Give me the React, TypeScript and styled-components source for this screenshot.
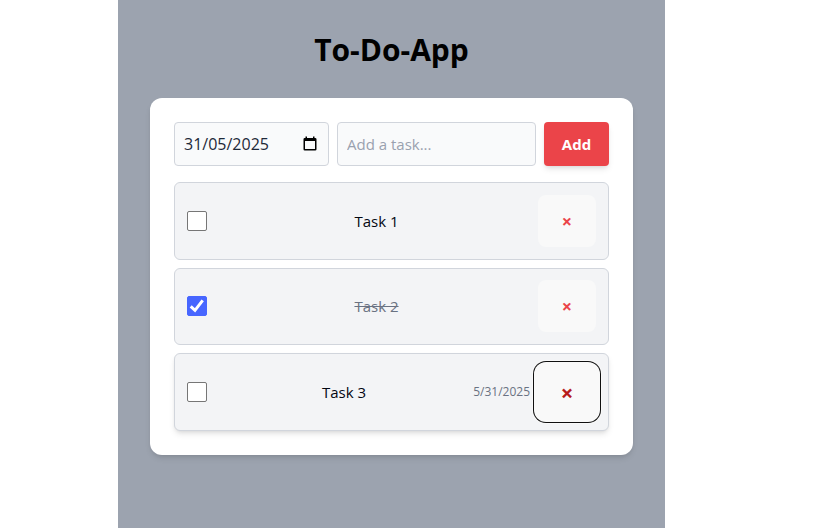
import React, { useState } from "react";
import styled, { createGlobalStyle, css } from "styled-components";

const GlobalStyle = createGlobalStyle`
  *, *::before, *::after { box-sizing: border-box; }
  body {
    margin: 0;
    background: #ffffff;
    color: #030712;
    font-family: "Segoe UI", "Open Sans", "Noto Sans", sans-serif;
    font-size: 15px;
    line-height: 24px;
  }
  button, input { font: inherit; }
`;

const Page = styled.div`
  display: grid;
  grid-template-columns: 118fr 547fr 174fr;
  min-height: 100vh;
`;

const Main = styled.main`
  grid-column: 2;
  min-width: 0;
  padding: 32px;
  background: #9ca3af;
`;

const Title = styled.h1`
  margin: 0 0 30px;
  text-align: center;
  font-size: 30px;
  line-height: 36px;
  font-weight: 700;
  color: #000000;
`;

const Card = styled.section`
  padding: 24px;
  border-radius: 12px;
  background: #ffffff;
  box-shadow: 0 4px 6px -1px rgba(0, 0, 0, 0.1), 0 2px 4px -2px rgba(0, 0, 0, 0.1);
`;

const Form = styled.form`
  display: flex;
  gap: 8px;
  height: 44px;
  margin-bottom: 16px;
`;

const fieldBox = css`
  border: 1px solid #d1d5dc;
  border-radius: 4px;
  background: #f9fafb;
`;

const DateField = styled.div`
  ${fieldBox}
  display: flex;
  align-items: center;
  flex: 0 0 155px;
  min-width: 0;
  padding: 0 11px 0 9px;
`;

const DateInput = styled.input`
  flex: 1;
  width: 0;
  min-width: 0;
  padding: 0;
  border: 0;
  outline: 0;
  background: transparent;
  color: #1e2939;
  font-size: 16px;
`;

const PickerButton = styled.button`
  display: flex;
  flex: none;
  padding: 0;
  border: 0;
  background: transparent;
  cursor: pointer;
`;

const TaskInput = styled.input`
  ${fieldBox}
  flex: 1;
  min-width: 0;
  padding: 0 9px;
  color: #1e2939;
  &::placeholder { color: #99a1af; opacity: 1; }
`;

const AddButton = styled.button`
  flex: 0 0 65px;
  padding: 0;
  border: 0;
  border-radius: 4px;
  background: #eb4449;
  color: #ffffff;
  font-weight: 700;
  cursor: pointer;
  box-shadow: 0 4px 6px -1px rgba(0, 0, 0, 0.1), 0 2px 4px -2px rgba(0, 0, 0, 0.1);
`;

const List = styled.ul`
  display: grid;
  grid-auto-rows: 1fr;
  gap: 8px;
  min-height: 249px;
  margin: 0;
  padding: 0;
  list-style: none;
`;

const Row = styled.li<{ $raised: boolean }>`
  display: flex;
  align-items: center;
  padding: 0 12px;
  border: 1px solid #d1d5dc;
  border-radius: 6px;
  background: #f3f4f6;
  box-shadow: ${(p) =>
    p.$raised ? "0 4px 6px -1px rgba(0, 0, 0, 0.1), 0 2px 4px -2px rgba(0, 0, 0, 0.1)" : "none"};
`;

const Check = styled.input`
  flex: none;
  appearance: none;
  width: 20px;
  height: 20px;
  margin: 0 8px 0 0;
  border: 1px solid #767676;
  border-radius: 2px;
  background: #ffffff;
  &:checked {
    border-color: #4766ff;
    background: #4766ff
      url("data:image/svg+xml,%3Csvg xmlns='http://www.w3.org/2000/svg' viewBox='0 0 20 20'%3E%3Cpath d='M3.7 10.3 8 14.3 15.7 4.4' fill='none' stroke='white' stroke-width='3'/%3E%3C/svg%3E")
      center / 20px 20px no-repeat;
    background-origin: border-box;
  }
`;

const Label = styled.label<{ $done: boolean }>`
  flex: 1;
  text-align: center;
  color: ${(p) => (p.$done ? "#6a7282" : "#030712")};
  text-decoration: ${(p) => (p.$done ? "line-through" : "none")};
`;

const Due = styled.time`
  margin-right: 8px;
  font-size: 12px;
  line-height: 16px;
  color: #6a7282;
`;

const DeleteButton = styled.button<{ $active: boolean }>`
  display: flex;
  align-items: center;
  justify-content: center;
  flex: none;
  width: 58px;
  height: 52px;
  padding: 0;
  border: 0;
  border-radius: 8px;
  background: #f9f9f9;
  color: ${(p) => (p.$active ? "#b71c1c" : "#eb4449")};
  font-size: ${(p) => (p.$active ? "22px" : "18px")};
  font-weight: 700;
  cursor: pointer;
  box-shadow: ${(p) =>
    p.$active ? "0 0 0 4px #f9f9f9, 0 0 0 5px #101010, 0 0 0 6px #f9f9f9" : "none"};
`;

const CalendarIcon = () => (
  <svg width="14" height="16" viewBox="0 0 14 16" aria-hidden="true">
    <path
      fill="#000000"
      fillRule="evenodd"
      d="M2.5 0.5H4V2H10V0.5H11.5V2H12.2Q13.5 2 13.5 3.3V13.2Q13.5 14.5 12.2 14.5H1.8Q0.5 14.5 0.5 13.2V3.3Q0.5 2 1.8 2H2.5ZM2 5V13H12V5Z"
    />
  </svg>
);

const initialTasks = [
  { id: 1, text: "Task 1", done: false, due: "" },
  { id: 2, text: "Task 2", done: true, due: "" },
  { id: 3, text: "Task 3", done: false, due: "5/31/2025" },
];

export default function App() {
  const [tasks, setTasks] = useState(initialTasks);
  const [date, setDate] = useState("31/05/2025");
  const [text, setText] = useState("");
  const activeId = 3;

  const addTask = (event: React.FormEvent) => {
    event.preventDefault();
    if (!text.trim()) return;
    const [day, month, year] = date.split("/");
    const due = year ? `${Number(month)}/${Number(day)}/${year}` : "";
    setTasks([...tasks, { id: Date.now(), text, done: false, due }]);
    setText("");
  };

  const toggle = (id: number) =>
    setTasks(tasks.map((t) => (t.id === id ? { ...t, done: !t.done } : t)));

  return (
    <Page>
      <GlobalStyle />
      <Main>
        <Title>To-Do-App</Title>
        <Card>
          <Form onSubmit={addTask}>
            <DateField>
              <DateInput
                aria-label="Due date"
                value={date}
                onChange={(e) => setDate(e.target.value)}
              />
              <PickerButton type="button" aria-label="Show date picker">
                <CalendarIcon />
              </PickerButton>
            </DateField>
            <TaskInput
              aria-label="Task"
              placeholder="Add a task..."
              value={text}
              onChange={(e) => setText(e.target.value)}
            />
            <AddButton type="submit">Add</AddButton>
          </Form>
          <List>
            {tasks.map((task) => {
              const active = task.id === activeId;
              return (
                <Row key={task.id} $raised={active}>
                  <Check
                    id={`task-${task.id}`}
                    type="checkbox"
                    checked={task.done}
                    onChange={() => toggle(task.id)}
                  />
                  <Label htmlFor={`task-${task.id}`} $done={task.done}>
                    {task.text}
                  </Label>
                  {task.due && <Due>{task.due}</Due>}
                  <DeleteButton
                    type="button"
                    $active={active}
                    aria-label={`Delete ${task.text}`}
                    onClick={() => setTasks(tasks.filter((t) => t.id !== task.id))}
                  >
                    ×
                  </DeleteButton>
                </Row>
              );
            })}
          </List>
        </Card>
      </Main>
    </Page>
  );
}
